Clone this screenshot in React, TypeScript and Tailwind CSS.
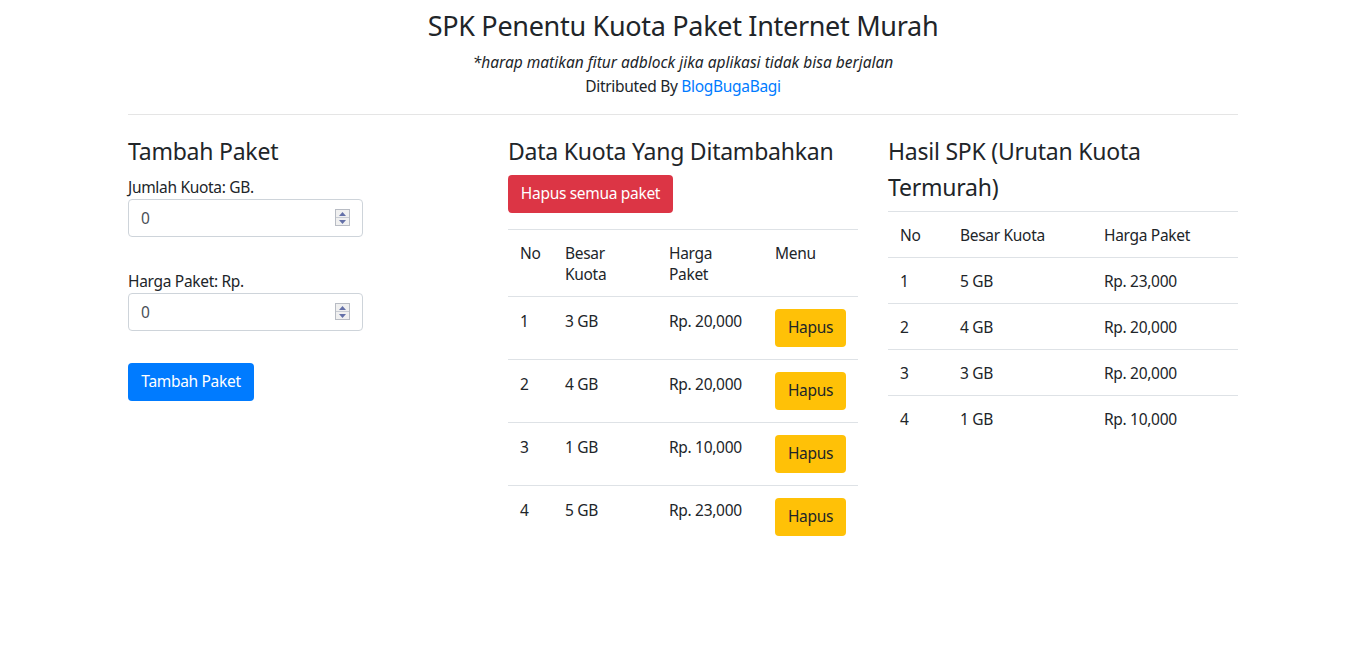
import React from "react";

const paket = [
  { no: 1, kuota: "3 GB", harga: "Rp. 20,000" },
  { no: 2, kuota: "4 GB", harga: "Rp. 20,000" },
  { no: 3, kuota: "1 GB", harga: "Rp. 10,000" },
  { no: 4, kuota: "5 GB", harga: "Rp. 23,000" },
];

const hasil = [
  { no: 1, kuota: "5 GB", harga: "Rp. 23,000" },
  { no: 2, kuota: "4 GB", harga: "Rp. 20,000" },
  { no: 3, kuota: "3 GB", harga: "Rp. 20,000" },
  { no: 4, kuota: "1 GB", harga: "Rp. 10,000" },
];

function Spinner() {
  return (
    <div className="absolute right-[13px] top-[10px] flex h-[17px] w-[15px] flex-col border border-[#b8bcc4] bg-[#f0f0f0]">
      <div className="flex flex-1 items-center justify-center border-b border-[#c8ccd4]">
        <svg width="7" height="4" viewBox="0 0 7 4">
          <path d="M0 4 L3.5 0 L7 4 Z" fill="#6470a8" />
        </svg>
      </div>
      <div className="flex flex-1 items-center justify-center">
        <svg width="7" height="4" viewBox="0 0 7 4">
          <path d="M0 0 L3.5 4 L7 0 Z" fill="#6470a8" />
        </svg>
      </div>
    </div>
  );
}

function NumberField({ label }: { label: string }) {
  return (
    <div>
      <label className="block leading-6">{label}</label>
      <div className="relative w-[235px]">
        <input
          type="text"
          defaultValue="0"
          className="block h-[38px] w-full rounded border border-[#ced4da] px-3 text-[#495057] outline-none"
        />
        <Spinner />
      </div>
    </div>
  );
}

export default function App() {
  return (
    <div
      className="min-h-screen bg-white text-[15.5px] tracking-[-0.02em] text-[#212529]"
      style={{ fontFamily: '"Noto Sans", "Open Sans", sans-serif' }}
    >
      <div className="mx-auto w-[1140px] px-[15px] pt-[5px]">
        <div className="text-center">
          <h1 className="mb-[3px] text-[27px] leading-[42px]">SPK Penentu Kuota Paket Internet Murah</h1>
          <p className="italic leading-6 tracking-normal">
            *harap matikan fitur adblock jika aplikasi tidak bisa berjalan
          </p>
          <p className="leading-6">
            Ditributed By <a className="text-[#007bff]">BlogBugaBagi</a>
          </p>
        </div>
        <hr className="mt-4 border-t border-[#e5e5e5]" />

        <div className="mt-[18px] grid grid-cols-3 gap-[30px]">
          {/* Tambah Paket */}
          <div>
            <h4 className="mb-[6px] text-[23px] leading-9 tracking-[-0.01em]">Tambah Paket</h4>
            <NumberField label="Jumlah Kuota: GB." />
            <div className="h-8" />
            <NumberField label="Harga Paket: Rp." />
            <button className="mt-8 h-[38px] w-[126px] rounded bg-[#007bff] text-white">Tambah Paket</button>
          </div>

          {/* Data Kuota */}
          <div>
            <h4 className="mb-[6px] whitespace-nowrap text-[23px] leading-9 tracking-[-0.01em]">
              Data Kuota Yang Ditambahkan
            </h4>
            <button className="h-[38px] w-[165px] rounded bg-[#dc3545] text-white">Hapus semua paket</button>
            <table className="mt-4 w-full table-fixed border-collapse text-left">
              <colgroup>
                <col className="w-[45px]" />
                <col className="w-[104px]" />
                <col className="w-[106px]" />
                <col className="w-[95px]" />
              </colgroup>
              <thead>
                <tr className="border-t border-[#dee2e6]">
                  <th className="px-3 pb-[11px] pt-[13px] align-top font-normal leading-[21px]">No</th>
                  <th className="px-3 pb-[11px] pt-[13px] align-top font-normal leading-[21px]">
                    Besar
                    <br />
                    Kuota
                  </th>
                  <th className="px-3 pb-[11px] pt-[13px] align-top font-normal leading-[21px]">
                    Harga
                    <br />
                    Paket
                  </th>
                  <th className="px-3 pb-[11px] pt-[13px] align-top font-normal leading-[21px]">Menu</th>
                </tr>
              </thead>
              <tbody>
                {paket.map((p) => (
                  <tr key={p.no} className="border-t border-[#dee2e6]">
                    <td className="p-3 align-top leading-6">{p.no}</td>
                    <td className="whitespace-nowrap p-3 align-top leading-6">{p.kuota}</td>
                    <td className="whitespace-nowrap p-3 align-top leading-6">{p.harga}</td>
                    <td className="p-3 align-top">
                      <button className="block h-[38px] w-[71px] rounded bg-[#ffc107] text-[#212529]">Hapus</button>
                    </td>
                  </tr>
                ))}
              </tbody>
            </table>
          </div>

          {/* Hasil SPK */}
          <div>
            <h4 className="mb-[6px] text-[23px] leading-9 tracking-[-0.01em]">Hasil SPK (Urutan Kuota Termurah)</h4>
            <table className="w-full table-fixed border-collapse text-left">
              <colgroup>
                <col className="w-[60px]" />
                <col className="w-[144px]" />
                <col className="w-[146px]" />
              </colgroup>
              <thead>
                <tr className="border-t border-[#dee2e6]">
                  <th className="px-3 pb-[11px] pt-[13px] font-normal leading-[21px]">No</th>
                  <th className="px-3 pb-[11px] pt-[13px] font-normal leading-[21px]">Besar Kuota</th>
                  <th className="px-3 pb-[11px] pt-[13px] font-normal leading-[21px]">Harga Paket</th>
                </tr>
              </thead>
              <tbody>
                {hasil.map((p) => (
                  <tr key={p.no} className="border-t border-[#dee2e6]">
                    <td className="px-3 pb-[11px] pt-[13px] leading-[21px]">{p.no}</td>
                    <td className="px-3 pb-[11px] pt-[13px] leading-[21px]">{p.kuota}</td>
                    <td className="px-3 pb-[11px] pt-[13px] leading-[21px]">{p.harga}</td>
                  </tr>
                ))}
              </tbody>
            </table>
          </div>
        </div>
      </div>
    </div>
  );
}
